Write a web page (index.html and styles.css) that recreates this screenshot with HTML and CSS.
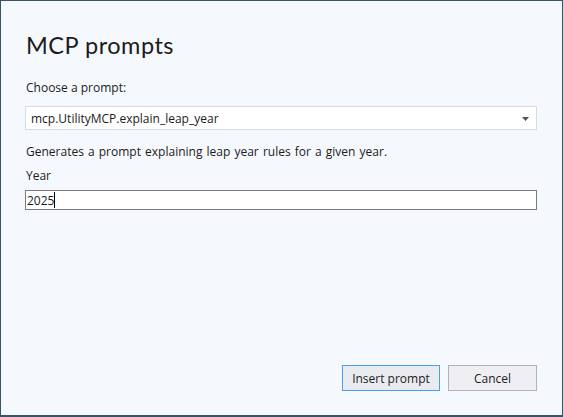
FILE: index.html
```html
<!DOCTYPE html>
<html>
<head>
<meta charset="utf-8">
<link rel="stylesheet" href="styles.css">
</head>
<body>
<div class="dialog">
  <h1 class="title">MCP prompts</h1>
  <div class="label label-choose">Choose a prompt:</div>
  <div class="select">
    <span class="select-text">mcp.UtilityMCP.explain_leap_year</span>
    <svg class="arrow" width="7" height="4" viewBox="0 0 7 4"><path d="M0 0H7L3.5 4Z" fill="#555"/></svg>
  </div>
  <div class="desc">Generates a prompt explaining leap year rules for a given year.</div>
  <div class="label label-year">Year</div>
  <div class="input"><span class="input-text">2025</span><span class="caret"></span></div>
  <div class="spacer"></div>
  <div class="buttons">
    <button class="btn btn-primary">Insert prompt</button>
    <button class="btn">Cancel</button>
  </div>
</div>
</body>
</html>
```
FILE: styles.css
```css
html, body {
  margin: 0;
  padding: 0;
}
body {
  width: 563px;
  height: 417px;
  font-family: "Open Sans", "Noto Sans", sans-serif;
  color: #1b1b1b;
}
.dialog {
  box-sizing: border-box;
  width: 563px;
  height: 417px;
  border: 1px solid #3a5262;
  border-bottom-width: 2px;
  background: #f5f9fd;
  padding: 0 25px 0 24px;
  display: flex;
  flex-direction: column;
}
.title {
  margin: 29px 0 0 1px;
  font-family: "Lato", "Open Sans", sans-serif;
  font-size: 23.5px;
  letter-spacing: 0.5px;
  font-weight: 400;
  line-height: 30px;
}
.label, .desc {
  font-size: 12px;
  line-height: 16px;
  margin-left: 1px;
}
.desc {
  word-spacing: 1px;
}
.label-choose {
  margin-top: 20px;
}
.select {
  box-sizing: border-box;
  margin-top: 10px;
  height: 24px;
  border: 1px solid #d8dce2;
  background: #fff;
  display: flex;
  align-items: center;
  padding: 0 7px 0 5px;
  font-size: 12px;
}
.select-text {
  flex: 1;
}
.arrow {
  margin-top: 1px;
}
.desc {
  margin-top: 14px;
}
.label-year {
  margin-top: 8px;
}
.input {
  box-sizing: border-box;
  margin-top: 6px;
  height: 20px;
  border: 1px solid #7a7a7a;
  background: #fff;
  display: flex;
  align-items: center;
  padding-left: 1px;
  font-size: 12px;
}
.caret {
  display: inline-block;
  width: 1px;
  height: 16px;
  background: #000;
}
.spacer {
  flex: 1;
}
.buttons {
  display: flex;
  justify-content: flex-end;
  gap: 8px;
  margin-bottom: 24px;
}
.btn {
  box-sizing: border-box;
  height: 26px;
  width: 89px;
  border: 1px solid #b4b4b4;
  background: #efeff3;
  font-family: inherit;
  font-size: 12px;
  color: #1b1b1b;
  padding: 0;
}
.btn-primary {
  width: 98px;
  border-color: #4aa0f0;
  background: #eaebf0;
}
```
